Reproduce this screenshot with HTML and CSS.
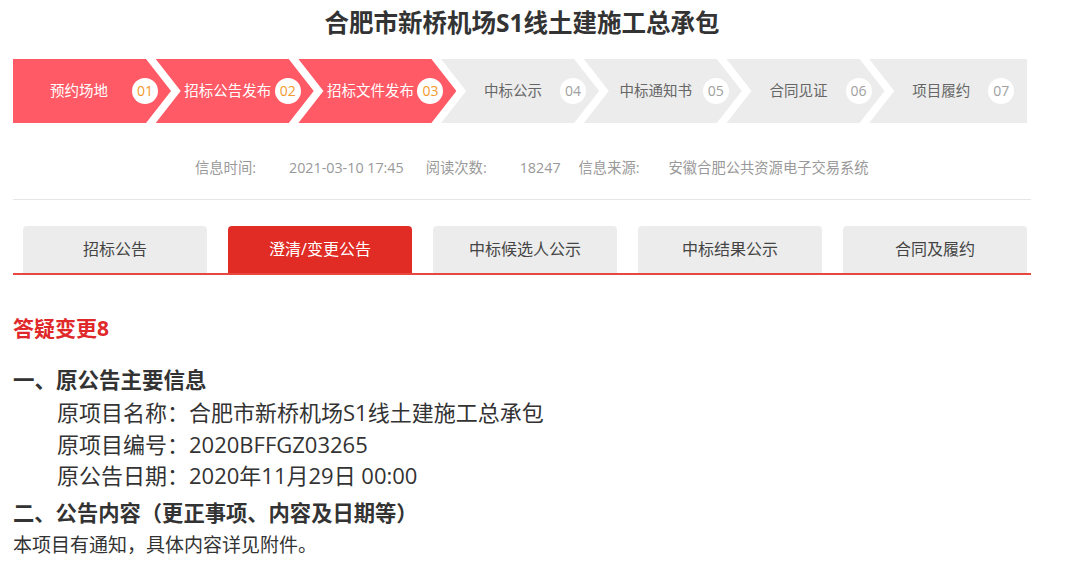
FILE: index.html
```html
<!DOCTYPE html>
<html lang="zh-CN">
<head>
<meta charset="utf-8">
<title>合肥市新桥机场S1线土建施工总承包</title>
<link rel="stylesheet" href="styles.css">
</head>
<body>
<div class="page">
  <h1 class="title">合肥市新桥机场S1线土建施工总承包</h1>

  <div class="steps">
    <div class="step step-first done"><span class="label">预约场地</span><span class="num">01</span></div>
    <div class="step step-mid done"><span class="label">招标公告发布</span><span class="num">02</span></div>
    <div class="step step-mid done"><span class="label">招标文件发布</span><span class="num">03</span></div>
    <div class="step step-mid"><span class="label">中标公示</span><span class="num">04</span></div>
    <div class="step step-mid"><span class="label">中标通知书</span><span class="num">05</span></div>
    <div class="step step-mid"><span class="label">合同见证</span><span class="num">06</span></div>
    <div class="step step-last"><span class="label">项目履约</span><span class="num">07</span></div>
  </div>

  <div class="info">
    <span class="info-label">信息时间:</span><span class="info-value info-time">2021-03-10 17:45</span>
    <span class="info-label">阅读次数:</span><span class="info-value">18247</span>
    <span class="info-label info-label-src">信息来源:</span><span class="info-value">安徽合肥公共资源电子交易系统</span>
  </div>

  <div class="tabs">
    <div class="tab">招标公告</div>
    <div class="tab active">澄清/变更公告</div>
    <div class="tab">中标候选人公示</div>
    <div class="tab">中标结果公示</div>
    <div class="tab">合同及履约</div>
  </div>

  <div class="content">
    <h2 class="notice-title">答疑变更8</h2>
    <h3 class="section">一、原公告主要信息</h3>
    <p class="item">原项目名称：合肥市新桥机场S1线土建施工总承包</p>
    <p class="item">原项目编号：2020BFFGZ03265</p>
    <p class="item">原公告日期：2020年11月29日 00:00</p>
    <h3 class="section section-2">二、公告内容（更正事项、内容及日期等）</h3>
    <p class="body-text">本项目有通知，具体内容详见附件。</p>
  </div>
</div>
</body>
</html>
```

FILE: styles.css
```css
* { box-sizing: border-box; }
html, body { margin: 0; padding: 0; background: #fff; }
body {
  font-family: "Open Sans", "Noto Sans CJK SC", "Liberation Sans", sans-serif;
  color: #333;
}
.page {
  width: 1018px;
  margin-left: 13px;
}
.title {
  margin: 0;
  height: 46px;
  line-height: 46px;
  font-size: 24.5px;
  font-weight: 700;
  text-align: center;
  color: #333;
}

/* steps */
.steps {
  display: flex;
  margin-top: 13px;
  height: 64px;
}
.step {
  flex: none;
  width: 158px;
  height: 64px;
  margin-right: -15.3px;
  display: flex;
  align-items: center;
  padding-left: 25px;
  padding-right: 13px;
  background: #ececec;
  color: #666;
  font-size: 14.5px;
  clip-path: polygon(0 0, 133px 0, 158px 50%, 133px 100%, 0 100%, 25px 50%);
}
.step-first {
  padding-left: 13px;
  clip-path: polygon(0 0, 133px 0, 158px 50%, 133px 100%, 0 100%);
}
.step-last {
  margin-right: 0;
  clip-path: polygon(0 0, 100% 0, 100% 100%, 0 100%, 25px 50%);
}
.step.done {
  background: #ff5a65;
  color: #fff;
}
.label {
  flex: 1;
  text-align: center;
  white-space: nowrap;
  line-height: 20px;
}
.num {
  flex: none;
  width: 26px;
  height: 26px;
  border-radius: 50%;
  background: #fff;
  color: #a0a0a0;
  font-size: 14px;
  line-height: 26px;
  text-align: center;
}
.step.done .num { color: #f39a2b; }

/* info */
.info {
  margin-top: 33px;
  padding-left: 182px;
  height: 44px;
  border-bottom: 1px solid #e6e6e6;
  font-size: 14.3px;
  color: #999;
  line-height: 24px;
  display: flex;
  align-items: flex-start;
}
.info-label { margin-right: 33px; }
.info-label-src { margin-right: 29px; }
.info-value { margin-right: 18px; }
.info-time { margin-right: 22px; }

/* tabs */
.tabs {
  margin-top: 26px;
  display: flex;
  gap: 21px;
  padding-left: 10px;
  border-bottom: 2px solid #e8473f;
}
.tab {
  width: 184px;
  height: 47px;
  line-height: 47px;
  text-align: center;
  font-size: 16px;
  color: #444;
  background: #ececec;
  border-radius: 4px 4px 0 0;
}
.tab.active {
  background: #e12b25;
  color: #fff;
}

/* content */
.content { padding-top: 38px; }
.notice-title {
  margin: 0;
  font-size: 21px;
  line-height: 30px;
  font-weight: 700;
  color: #e0282a;
}
.section {
  margin: 21px 0 1px;
  font-size: 21.5px;
  line-height: 32px;
  font-weight: 700;
  color: #333;
}
.section-2 { margin-top: 5px; margin-bottom: 0; font-size: 21.3px; }
.item {
  margin: 0;
  padding-left: 44px;
  font-size: 22px;
  line-height: 31.5px;
  color: #333;
}
.body-text {
  margin: 0;
  font-size: 19px;
  line-height: 32px;
  color: #333;
}
```
